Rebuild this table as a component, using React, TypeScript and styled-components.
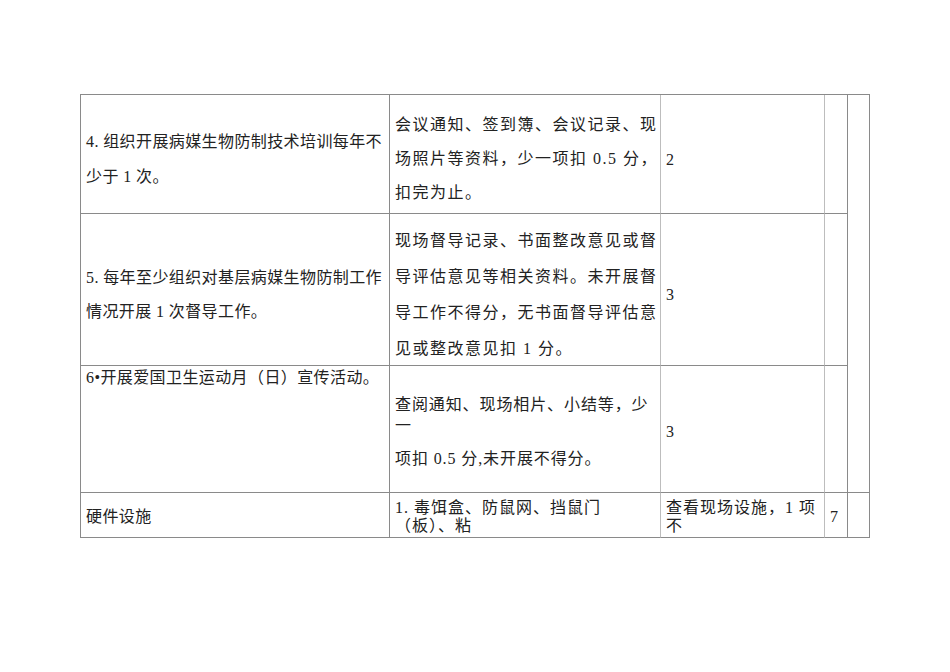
import React from 'react';
import styled, { createGlobalStyle } from 'styled-components';

const GlobalStyle = createGlobalStyle`
  html, body {
    margin: 0;
    padding: 0;
    background: #fff;
  }
  * {
    box-sizing: border-box;
  }
`;

const Page = styled.div`
  padding: 94px 0 0 80px;
  min-height: 672px;
  font-family: "Liberation Serif", "Noto Sans CJK SC", serif;
  font-size: 16px;
  color: #222;
`;

const Sheet = styled.div`
  display: grid;
  grid-template-columns: 309px 271px 164px 23px 22px;
  grid-template-rows: 119px 152px 127px 45px;
  width: 790px;
  border-top: 1px solid #8a8a8a;
  border-left: 1px solid #8a8a8a;
`;

type CellProps = {
  $pt?: number;
  $align?: 'center' | 'flex-start';
  $ls?: number;
  $lh?: number;
  $light?: boolean;
  $span?: number;
};

const Cell = styled.div<CellProps>`
  display: flex;
  flex-direction: column;
  justify-content: ${(p) => p.$align || 'center'};
  padding: ${(p) => p.$pt ?? 10}px 0 0 5px;
  border-right: 1px solid ${(p) => (p.$light ? '#bdbdbd' : '#8a8a8a')};
  border-bottom: 1px solid #8a8a8a;
  letter-spacing: ${(p) => p.$ls ?? 0.4}px;
  line-height: ${(p) => p.$lh ?? 35}px;
  grid-row: ${(p) => (p.$span ? `span ${p.$span}` : 'auto')};
  overflow: visible;
`;

const Line = styled.div<{ $gap?: number }>`
  white-space: nowrap;
  margin-top: ${(p) => p.$gap ?? 0}px;
`;

const Score = styled.div`
  white-space: nowrap;
`;

export default function App() {
  return (
    <>
      <GlobalStyle />
      <Page>
        <Sheet>
          {/* row 4 */}
          <Cell>
            <Line>4. 组织开展病媒生物防制技术培训每年不</Line>
            <Line>少于 1 次。</Line>
          </Cell>
          <Cell $ls={1.5} $lh={34} $light>
            <Line>会议通知、签到簿、会议记录、现</Line>
            <Line>场照片等资料，少一项扣 0.5 分，</Line>
            <Line>扣完为止。</Line>
          </Cell>
          <Cell $light>
            <Score>2</Score>
          </Cell>
          <Cell />
          <Cell $span={3} />

          {/* row 5 */}
          <Cell $lh={34}>
            <Line>5. 每年至少组织对基层病媒生物防制工作</Line>
            <Line>情况开展 1 次督导工作。</Line>
          </Cell>
          <Cell $ls={1.5} $lh={36} $light>
            <Line>现场督导记录、书面整改意见或督</Line>
            <Line>导评估意见等相关资料。未开展督</Line>
            <Line>导工作不得分，无书面督导评估意</Line>
            <Line>见或整改意见扣 1 分。</Line>
          </Cell>
          <Cell $light>
            <Score>3</Score>
          </Cell>
          <Cell />

          {/* row 6 */}
          <Cell $align="flex-start" $pt={2} $lh={20}>
            <Line>6•开展爱国卫生运动月（日）宣传活动。</Line>
          </Cell>
          <Cell $align="flex-start" $pt={28} $ls={0.9} $lh={21} $light>
            <Line>查阅通知、现场相片、小结等，少</Line>
            <Line>一</Line>
            <Line $gap={12}>项扣 0.5 分,未开展不得分。</Line>
          </Cell>
          <Cell $pt={4} $light>
            <Score>3</Score>
          </Cell>
          <Cell />

          {/* row 7 */}
          <Cell $pt={4} $lh={20}>
            <Line>硬件设施</Line>
          </Cell>
          <Cell $pt={4} $ls={1} $lh={18} $light>
            <Line>1. 毒饵盒、防鼠网、挡鼠门</Line>
            <Line>（板）、粘</Line>
          </Cell>
          <Cell $pt={4} $ls={1} $lh={18} $light>
            <Line>查看现场设施，1 项</Line>
            <Line>不</Line>
          </Cell>
          <Cell $pt={4} $lh={20}>
            <Score>7</Score>
          </Cell>
          <Cell />
        </Sheet>
      </Page>
    </>
  );
}
